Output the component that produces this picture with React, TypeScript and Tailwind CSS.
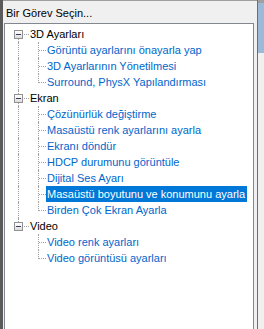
import React from "react";

type Item = { label: string; level: 0 | 1; lastChild?: boolean; parentLast?: boolean; first?: boolean; lastTop?: boolean; selected?: boolean };

const items: Item[] = [
  { label: "3D Ayarları", level: 0, first: true },
  { label: "Görüntü ayarlarını önayarla yap", level: 1 },
  { label: "3D Ayarlarının Yönetilmesi", level: 1 },
  { label: "Surround, PhysX Yapılandırması", level: 1, lastChild: true },
  { label: "Ekran", level: 0 },
  { label: "Çözünürlük değiştirme", level: 1 },
  { label: "Masaüstü renk ayarlarını ayarla", level: 1 },
  { label: "Ekranı döndür", level: 1 },
  { label: "HDCP durumunu görüntüle", level: 1 },
  { label: "Dijital Ses Ayarı", level: 1 },
  { label: "Masaüstü boyutunu ve konumunu ayarla", level: 1, selected: true },
  { label: "Birden Çok Ekran Ayarla", level: 1, lastChild: true },
  { label: "Video", level: 0, lastTop: true },
  { label: "Video renk ayarları", level: 1, parentLast: true },
  { label: "Video görüntüsü ayarları", level: 1, parentLast: true, lastChild: true },
];

function MinusBox() {
  return (
    <div className="absolute left-[4px] top-[4px] w-[9px] h-[9px] border border-[#919191] bg-gradient-to-b from-white to-[#dcdcdc] flex items-center justify-center">
      <div className="w-[5px] h-[1px] bg-[#3b3b5c]" />
    </div>
  );
}

function Row({ it }: { it: Item }) {
  if (it.level === 0) {
    return (
      <div className="flex h-[16px] items-center">
        <div className="relative w-[20px] h-[16px] shrink-0">
          {!it.first && <div className="absolute left-[8px] top-0 h-[4px] border-l border-dotted border-[#a0a0a0]" />}
          {!it.lastTop && <div className="absolute left-[8px] top-[13px] h-[3px] border-l border-dotted border-[#a0a0a0]" />}
          <div className="absolute left-[14px] top-[8px] w-[5px] border-t border-dotted border-[#a0a0a0]" />
          <MinusBox />
        </div>
        <div className="pl-[0px] text-black whitespace-nowrap leading-[16px]">{it.label}</div>
      </div>
    );
  }
  return (
    <div className="flex h-[16px] items-center">
      <div className="relative w-[20px] h-[16px] shrink-0">
        {!it.parentLast && <div className="absolute left-[8px] top-0 h-[16px] border-l border-dotted border-[#a0a0a0]" />}
      </div>
      <div className="relative w-[16px] h-[16px] shrink-0">
        <div className={`absolute left-[8px] top-0 border-l border-dotted border-[#a0a0a0] ${it.lastChild ? "h-[9px]" : "h-[16px]"}`} />
        <div className="absolute left-[9px] top-[8px] w-[7px] border-t border-dotted border-[#a0a0a0]" />
      </div>
      <div
        className={`whitespace-nowrap leading-[16px] h-[16px] pl-[1px] pr-[2px] ${
          it.selected ? "bg-[#0078d7] text-white" : "text-[#0066cc]"
        }`}
      >
        {it.label}
      </div>
    </div>
  );
}

export default function App() {
  return (
    <div className="w-[264px] h-[329px] flex overflow-hidden bg-[#f0f0f0] text-[11px] font-['Liberation_Sans',Arial,sans-serif]">
      <div className="w-[3px] shrink-0 bg-[#5a5a5a]" />
      <div className="w-[254px] shrink-0 flex flex-col border-t border-[#a0a0a0]">
        <div className="h-[22px] shrink-0 pl-[3px] pt-[6px] leading-[13px] text-black">Bir Görev Seçin...</div>
        <div className="ml-[1px] mr-[3px] flex-1 bg-white border-l border-t border-r border-[#828790] pl-[5px] pt-[2px]">
          {items.map((it, i) => (
            <Row key={i} it={it} />
          ))}
        </div>
      </div>
      <div className="w-[1px] shrink-0 bg-[#6d6d6d]" />
      <div className="flex-1 flex flex-col">
        <div className="h-[3px] bg-[#a0a0a0]" />
        <div className="h-[50px] bg-[#9db9d8]" />
        <div className="flex-1 bg-[#f0f0f0]" />
      </div>
    </div>
  );
}
